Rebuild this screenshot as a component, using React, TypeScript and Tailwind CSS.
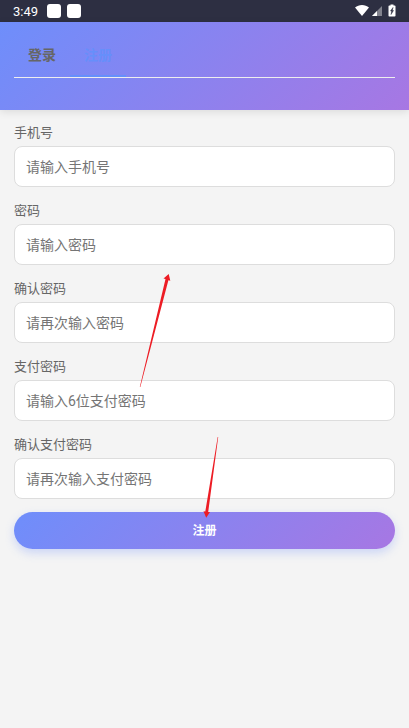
import { useState } from "react";

const fields = [
  { id: "phone", label: "手机号", placeholder: "请输入手机号", type: "tel" },
  {
    id: "password",
    label: "密码",
    placeholder: "请输入密码",
    type: "password",
  },
  {
    id: "confirm-password",
    label: "确认密码",
    placeholder: "请再次输入密码",
    type: "password",
  },
  {
    id: "pay-password",
    label: "支付密码",
    placeholder: "请输入6位支付密码",
    type: "password",
  },
  {
    id: "confirm-pay-password",
    label: "确认支付密码",
    placeholder: "请再次输入支付密码",
    type: "password",
  },
];

const StatusBar = () => {
  return (
    <div className="flex h-[22px] items-center justify-between bg-[#2d2f42] px-[13px] text-white">
      <div className="flex items-center gap-[6px]">
        <span className="mr-[3px] text-[13px] leading-none">3:49</span>
        <span className="size-[14px] rounded-[3px] bg-white" />
        <span className="size-[14px] rounded-[3px] bg-white" />
      </div>
      <svg width="41" height="14" viewBox="0 0 41 14" fill="currentColor">
        <path d="M0 3.6C2 1.9 4.4 1 7 1s5 .9 7 2.6L7 12z" />
        <path d="M27 2v10H17z" opacity=".4" />
        <path d="M22 7v5h-5z" />
        <path d="M35.5 1.5V.5h3v1h1.2c.5 0 .8.3.8.8v9.4c0 .5-.3.8-.8.8h-5.4c-.5 0-.8-.3-.8-.8V2.300c0-.5.3-.8.8-.8z" />
        <path
          d="M38 3.5L35.500 7h1.200L36 10.500l2.500-4h-1.200z"
          fill="#2d2f42"
          stroke="#2d2f42"
          strokeWidth=".5"
        />
      </svg>
    </div>
  );
};

const Tabs = ({
  active,
  onChange,
}: {
  active: string;
  onChange: (tab: string) => void;
}) => {
  return (
    <div role="tablist" className="flex border-b border-[#eee]">
      {["登录", "注册"].map((tab) => (
        <button
          key={tab}
          type="button"
          role="tab"
          aria-selected={active === tab}
          onClick={() => onChange(tab)}
          className={`h-[41px] border-b-2 px-[14px] pb-0.5 text-sm font-bold ${
            active === tab
              ? "border-[#668ffb] text-[#668ffb]"
              : "border-transparent text-[#666]"
          }`}
        >
          {tab}
        </button>
      ))}
    </div>
  );
};

const Arrows = () => {
  return (
    <svg
      className="pointer-events-none absolute left-0 top-0"
      width="409"
      height="728"
      viewBox="0 0 409 728"
      fill="#ed1c24"
      aria-hidden="true"
    >
      <path d="M139.8 387L165.500 279l-2-.4 5.200-4.600 1.600 6.800-1.900-.5L140.300 387z" />
      <path d="M217.700 437L205.300 511.500l-1.800-.2 2.700 6.400 3.800-5.600-1.800-.2L218.200 437z" />
    </svg>
  );
};

export default function App() {
  const [tab, setTab] = useState("注册");

  return (
    <div className="relative min-h-screen bg-[#f4f4f4] font-[Roboto,'Noto_Sans_CJK_SC',sans-serif]">
      <StatusBar />
      <header className="bg-[linear-gradient(135deg,#6e8efb,#a777e3)] px-[14px] pt-[14px] pb-8 shadow-[0_2px_8px_rgba(0,0,0,0.1)]">
        <Tabs active={tab} onChange={setTab} />
      </header>
      <form
        className="flex flex-col gap-[13px] p-[14px]"
        onSubmit={(e) => e.preventDefault()}
      >
        <div className="flex flex-col gap-[15px]">
          {fields.map((field) => (
            <div key={field.id} className="flex flex-col gap-1">
              <label
                htmlFor={field.id}
                className="text-[13px] leading-[18px] text-[#666]"
              >
                {field.label}
              </label>
              <input
                id={field.id}
                type={field.type}
                placeholder={field.placeholder}
                className="h-[41px] w-full rounded-lg border border-[#ddd] bg-white px-[11px] text-sm placeholder:text-[#757575]"
              />
            </div>
          ))}
        </div>
        <button
          type="submit"
          className="h-[37px] rounded-full bg-[linear-gradient(135deg,#6e8efb,#a777e3)] text-xs font-bold text-white shadow-[0_4px_10px_rgba(110,142,251,0.3)]"
        >
          注册
        </button>
      </form>
      <Arrows />
    </div>
  );
}
